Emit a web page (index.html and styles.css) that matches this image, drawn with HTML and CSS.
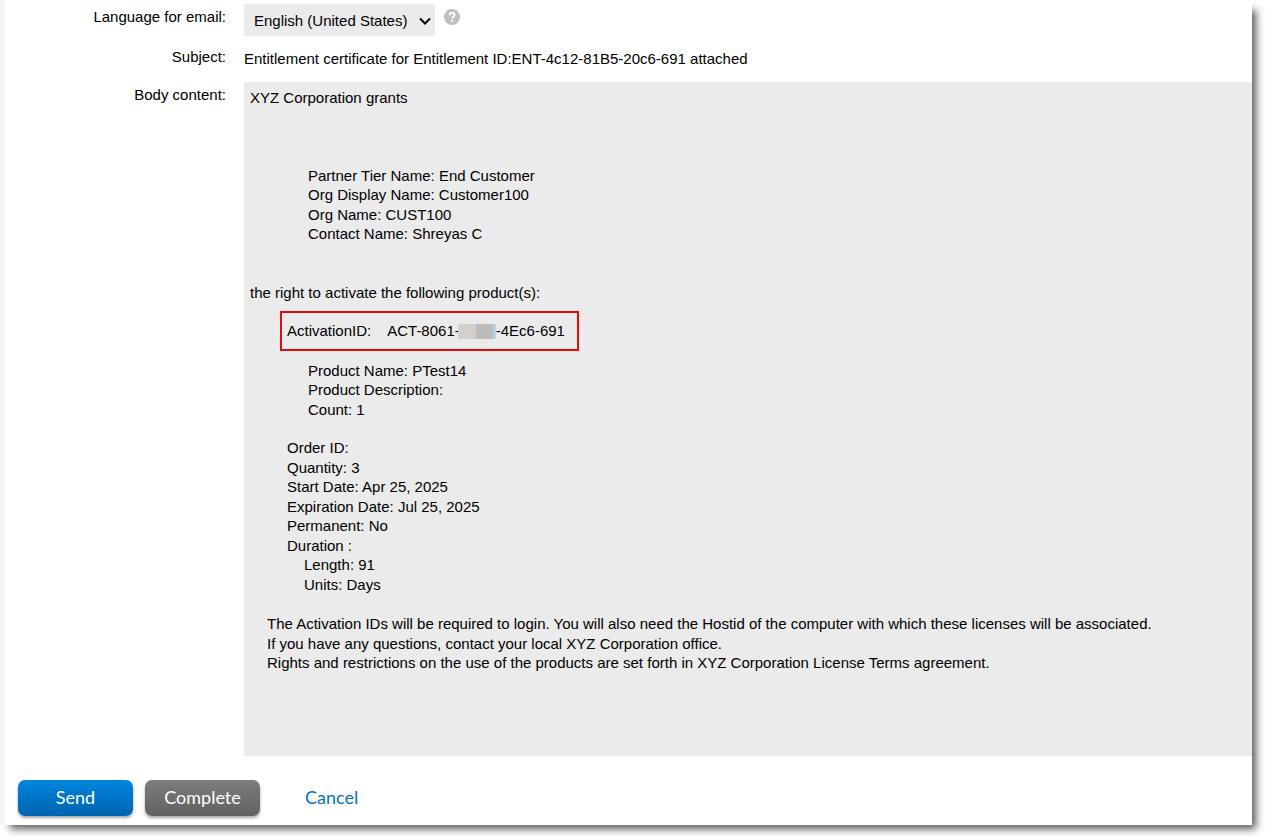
FILE: index.html
```html
<!DOCTYPE html>
<html lang="en">
<head>
    <meta charset="UTF-8">
    <meta name="viewport" content="width=device-width, initial-scale=1.0">
    <title>Email Entitlement Certificate</title>
    <link rel="stylesheet" href="styles.css">
</head>
<body>
    <form class="page">
        <div class="row">
            <label class="label" for="language">Language for email:</label>
            <div class="field">
                <div class="select">
                    <select id="language">
                        <option>English (United States)</option>
                    </select>
                    <svg class="arrow" viewBox="0 0 12 8" aria-hidden="true">
                        <path d="M1 1.5L6 6.5L11 1.5" fill="none" stroke="#000" stroke-width="2"/>
                    </svg>
                </div>
                <svg class="help" viewBox="0 0 16 16" role="img" aria-label="Help">
                    <circle cx="8" cy="8" r="8" fill="#c1c1c1"/>
                    <path d="M5.6 6.2C5.6 4.7 6.6 3.9 8 3.9s2.500.8 2.500 2.100c0 1.700-2.300 1.700-2.300 3.300" fill="none" stroke="#fff" stroke-width="2"/>
                    <rect x="7.200" y="10.500" width="2" height="2" fill="#fff"/>
                </svg>
            </div>
        </div>

        <div class="row">
            <div class="label">Subject:</div>
            <div class="subject">Entitlement certificate for Entitlement ID:ENT-4c12-81B5-20c6-691 attached</div>
        </div>

        <div class="row">
            <div class="label">Body content:</div>
            <div class="content">
                <p>XYZ Corporation grants</p>
                <p class="partner">
                    Partner Tier Name: End Customer<br>
                    Org Display Name: Customer100<br>
                    Org Name: CUST100<br>
                    Contact Name: Shreyas C
                </p>
                <p>the right to activate the following product(s):</p>
                <div class="activation">
                    <span>ActivationID:</span>
                    <span class="activation-id">ACT-8061-<span class="masked"></span>-4Ec6-691</span>
                </div>
                <p class="product">
                    Product Name: PTest14<br>
                    Product Description:<br>
                    Count: 1
                </p>
                <div class="order">
                    Order ID:<br>
                    Quantity: 3<br>
                    Start Date: Apr 25, 2025<br>
                    Expiration Date: Jul 25, 2025<br>
                    Permanent: No<br>
                    Duration :
                    <div class="duration">
                        Length: 91<br>
                        Units: Days
                    </div>
                </div>
                <p class="terms">
                    The Activation IDs will be required to login. You will also need the Hostid of the computer with which these licenses will be associated.<br>
                    If you have any questions, contact your local XYZ Corporation office.<br>
                    Rights and restrictions on the use of the products are set forth in XYZ Corporation License Terms agreement.
                </p>
            </div>
        </div>

        <div class="buttons">
            <button type="button" class="send">Send</button>
            <button type="button" class="complete">Complete</button>
            <a href="#" class="cancel">Cancel</a>
        </div>
    </form>
</body>
</html>
```

FILE: styles.css
```css
* {
    box-sizing: border-box;
}
body {
    margin: 0;
    background-color: #fff;
    color: #000;
    font-family: "Liberation Sans", Arial, sans-serif;
    font-size: 15px;
    line-height: 1.3;
}
p {
    margin: 0;
}
.page {
    display: flex;
    flex-direction: column;
    gap: 8px;
    margin: 0 15px 15px 0;
    padding: 4px 0 9px;
    border-left: 5px solid #f5f5f5;
    background-color: #fff;
    box-shadow: 7px 7px 8px -3px rgba(0, 0, 0, 0.65);
}
.row {
    display: grid;
    grid-template-columns: 221px 1fr;
    column-gap: 18px;
    align-items: start;
    min-height: 30px;
}
.label {
    padding-top: 3px;
    text-align: right;
}
.field {
    display: flex;
    gap: 9px;
}
.select {
    position: relative;
}
select {
    display: block;
    width: 191px;
    height: 32px;
    padding: 0 0 0 10px;
    border: none;
    border-radius: 0;
    background-color: #ebebeb;
    color: #000;
    font-family: inherit;
    font-size: 15px;
    appearance: none;
}
.arrow {
    position: absolute;
    top: 13px;
    right: 4px;
    width: 12px;
    height: 8px;
    pointer-events: none;
}
.help {
    width: 16px;
    height: 16px;
    margin-top: 5px;
}
.subject {
    padding-top: 5px;
}
.content {
    min-height: 674px;
    padding: 6px;
    background-color: #ebebeb;
}
.partner {
    margin: 58px 0 39px 58px;
}
.activation {
    display: flex;
    gap: 16px;
    width: 299px;
    margin: 9px 0 10px 30px;
    padding: 8px 5px;
    border: 2px solid #e30b0b;
}
.activation-id {
    display: flex;
}
.masked {
    width: 38px;
    height: 15px;
    margin: 3px 0 0 -2px;
    background: linear-gradient(to right, #d4d0c9 18px, #bfbbbb 18px, #bfbbbb 35px, #b0d5ee 35px);
}
.product {
    margin-left: 58px;
}
.order {
    margin: 19px 0 20px 37px;
}
.duration {
    margin-left: 17px;
}
.terms {
    margin-left: 17px;
}
.buttons {
    display: flex;
    gap: 12px;
    margin: 16px 0 0 13px;
    font-family: Lato, sans-serif;
    font-size: 18px;
}
.buttons button {
    width: 115px;
    height: 36px;
    padding: 0 0 2px;
    border: none;
    border-radius: 7px;
    box-shadow: 0 2px 3px rgba(0, 0, 0, 0.35);
    color: #fff;
    font-family: inherit;
    font-size: inherit;
    cursor: pointer;
}
.buttons .send {
    background: linear-gradient(#0085e0, #0064ae);
}
.buttons .complete {
    background: linear-gradient(#7d7d7d, #616161);
}
.cancel {
    margin-left: 33px;
    color: #0072c6;
    line-height: 34px;
    text-decoration: none;
}
```
